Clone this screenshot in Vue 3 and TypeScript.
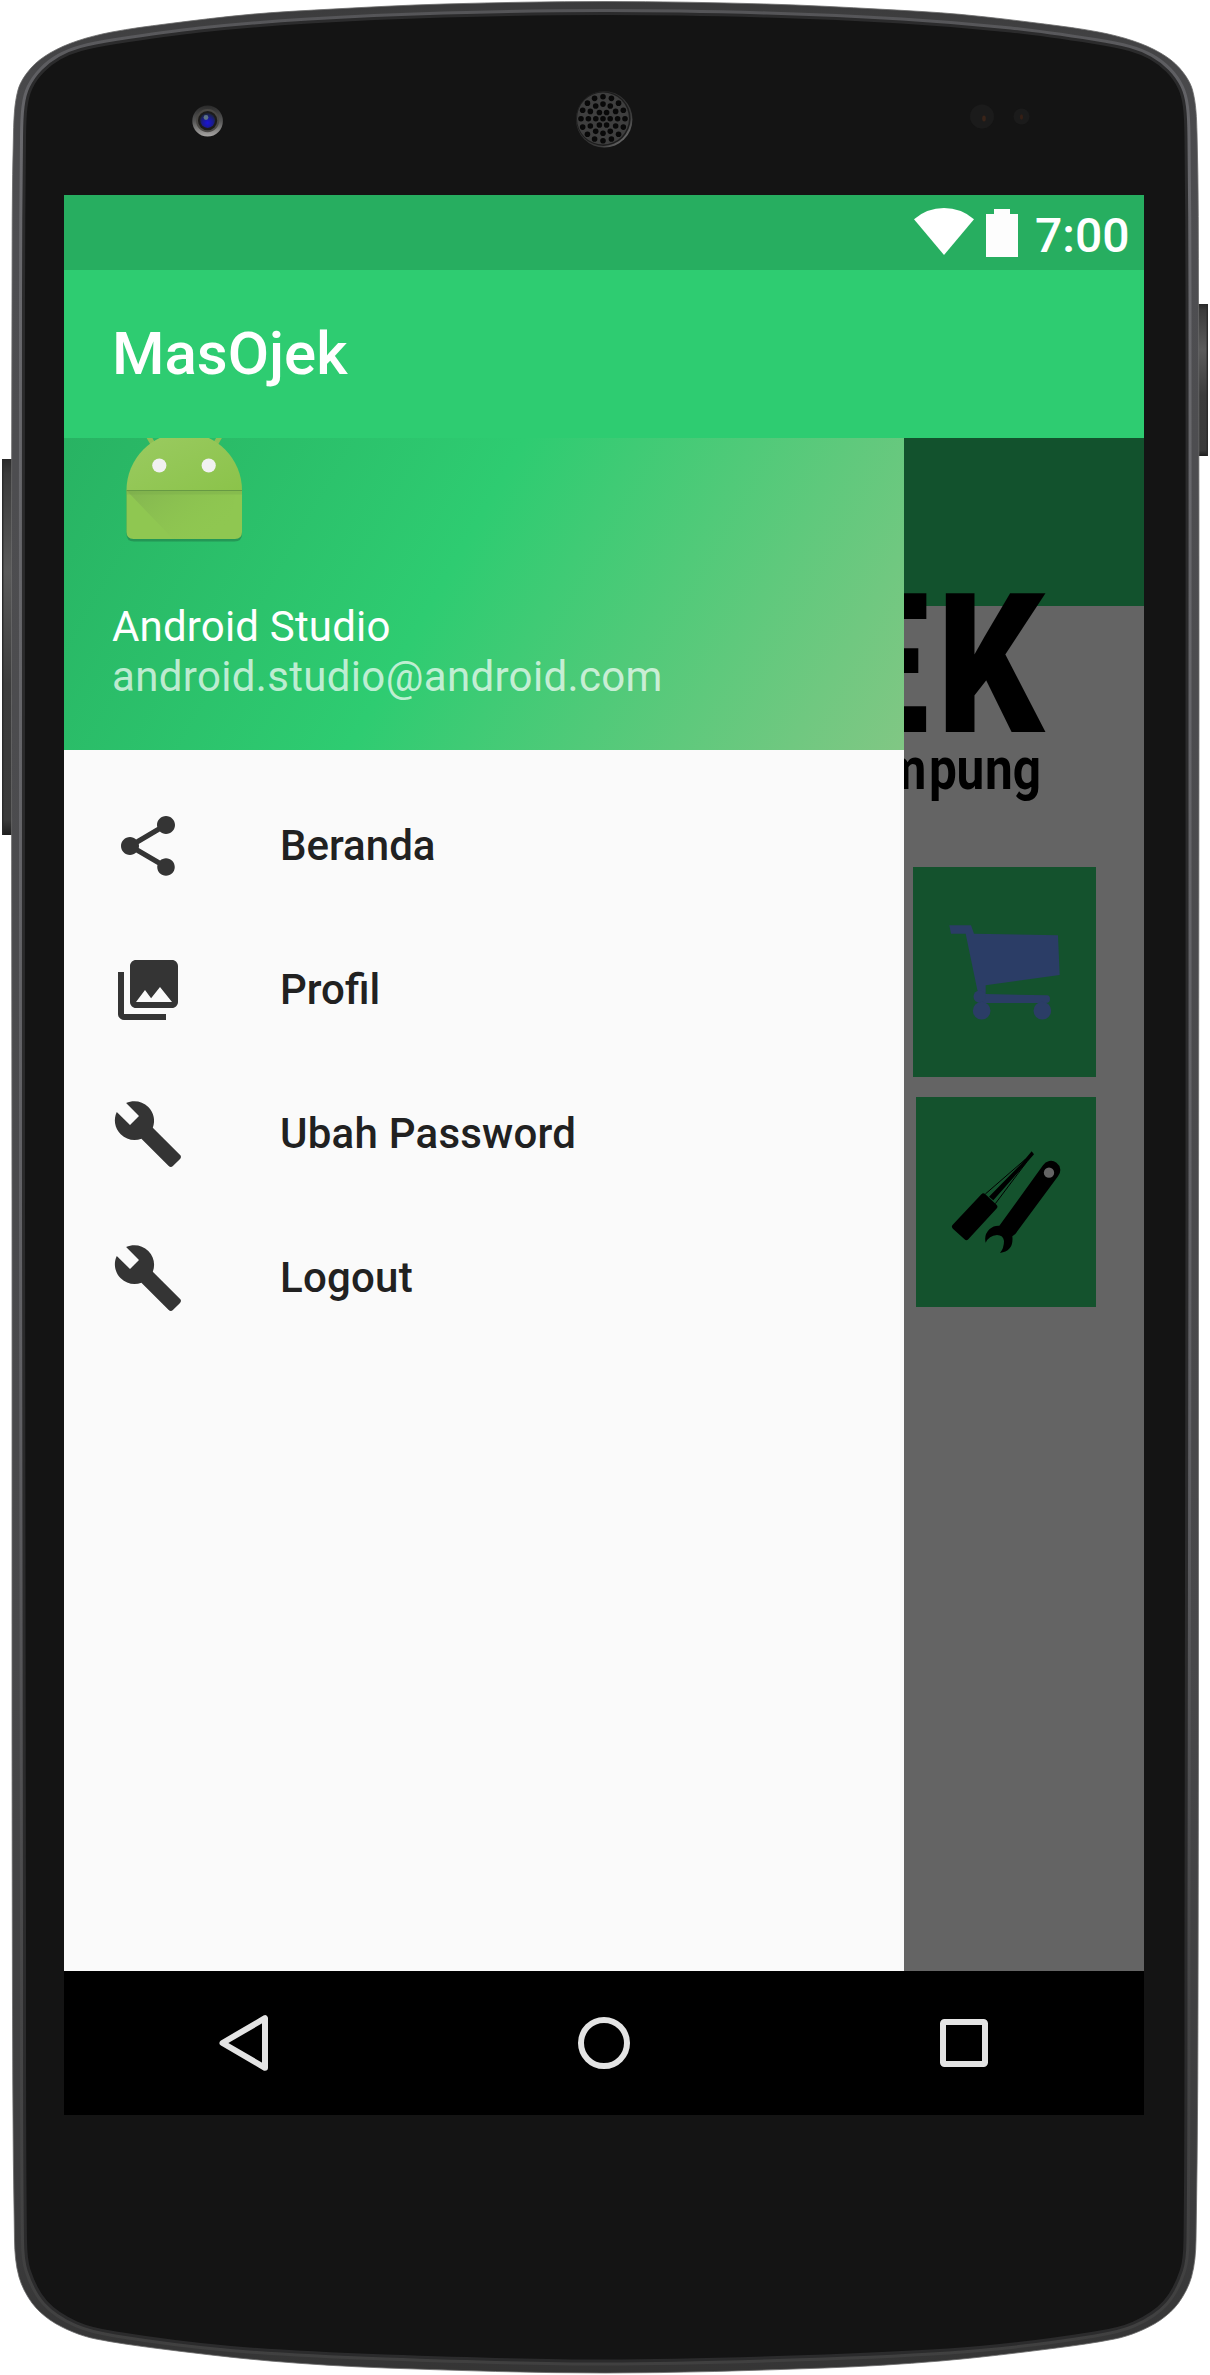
<script setup lang="ts">
type Point = [number, number]

interface MenuItem {
  label: string
  icon: string
}

const share =
  'M18 16.08c-.76 0-1.44.3-1.96.77L8.91 12.7c.05-.23.09-.46.09-.7s-.04-.47-.09-.7l7.05-4.11c.54.5 1.25.81 2.04.81 1.66 0 3-1.34 3-3s-1.34-3-3-3-3 1.34-3 3c0 .24.04.47.09.7L8.04 9.81C7.5 9.31 6.79 9 6 9c-1.66 0-3 1.34-3 3s1.34 3 3 3c.79 0 1.5-.31 2.04-.81l7.12 4.16c-.05.21-.08.43-.08.65 0 1.61 1.31 2.92 2.92 2.92s2.92-1.31 2.92-2.92-1.31-2.92-2.92-2.92z'
const gallery =
  'M22 16V4c0-1.1-.9-2-2-2H8c-1.1 0-2 .9-2 2v12c0 1.1.9 2 2 2h12c1.1 0 2-.9 2-2zm-11-4l2.03 2.71L16 11l4 5H8l3-4zM2 6v14c0 1.1.9 2 2 2h14v-2H4V6H2z'
const wrench =
  'M22.7 19l-9.1-9.1c.9-2.3.4-5-1.5-6.9-2-2-5-2.4-7.4-1.3L9 6 6 9 1.6 4.7C.4 7.1.9 10.1 2.9 12.1c1.9 1.9 4.6 2.4 6.9 1.5l9.1 9.1c.4.4 1 .4 1.4 0l2.3-2.3c.5-.4.5-1.1.1-1.4z'

const menu: MenuItem[] = [
  { label: 'Beranda', icon: share },
  { label: 'Profil', icon: gallery },
  { label: 'Ubah Password', icon: wrench },
  { label: 'Logout', icon: wrench },
]

// Left half of the case outline, top centre to bottom centre.
const outerEdge: Point[] = [
  [605, 1.5], [444, 4], [328, 9.3], [251, 14.3], [166, 24], [112, 32], [77, 41], [50, 53],
  [31, 68], [18, 90], [13.5, 133], [12, 300], [11.5, 700], [12, 1200], [12.3, 1920], [14.5, 2240],
  [19, 2277], [32, 2303], [50, 2320], [73, 2332], [96, 2339], [154, 2348], [270, 2361], [386, 2368], [605, 2373],
]
const innerEdge: Point[] = [
  [605, 13.5], [444, 16], [309, 22], [200, 31], [116, 42.5], [81, 49.5], [60, 58], [43, 71],
  [31, 88], [26, 107], [24.5, 140], [23.5, 300], [23.5, 700], [23.5, 1200], [24.5, 1920], [25.5, 2240],
  [29, 2270], [46, 2302], [77, 2323], [116, 2333], [231, 2347.5], [386, 2356], [605, 2361],
]

// Closed Catmull-Rom curve through the half outline and its mirror image.
function outline(half: Point[]): string {
  const mirrored = half.slice(1, -1).reverse().map(([x, y]): Point => [1210.5 - x, y])
  const pts = [...half, ...mirrored]
  const n = pts.length
  let d = `M${pts[0][0]} ${pts[0][1]}`
  for (let i = 0; i < n; i++) {
    const a = pts[(i - 1 + n) % n]
    const b = pts[i]
    const c = pts[(i + 1) % n]
    const e = pts[(i + 2) % n]
    const ab = Math.hypot(b[0] - a[0], b[1] - a[1])
    const bc = Math.hypot(c[0] - b[0], c[1] - b[1])
    const ce = Math.hypot(e[0] - c[0], e[1] - c[1])
    const t1 = bc / (ab + bc) / 3
    const t2 = bc / (bc + ce) / 3
    const p = [b[0] + (c[0] - a[0]) * t1, b[1] + (c[1] - a[1]) * t1]
    const q = [c[0] - (e[0] - b[0]) * t2, c[1] - (e[1] - b[1]) * t2]
    d += `C${p[0].toFixed(1)} ${p[1].toFixed(1)} ${q[0].toFixed(1)} ${q[1].toFixed(1)} ${c[0]} ${c[1]}`
  }
  return d + 'Z'
}

const outer = outline(outerEdge)
const inner = outline(innerEdge)

// Speaker grille: rings of holes as [radius, count].
const rings: [number, number][] = [[0, 1], [7.2, 6], [14.6, 12], [22, 16]]
const holes: Point[] = rings.flatMap(([r, count]) =>
  Array.from({ length: count }, (_, i): Point => {
    const a = (i / count) * Math.PI * 2
    return [603 + r * Math.cos(a), 118.7 + r * Math.sin(a)]
  }),
)
</script>

<template>
  <div class="phone">
    <svg class="case" viewBox="0 0 1210 2375" width="1210" height="2375">
      <defs>
        <linearGradient id="rim" x1="0" y1="0" x2="0" y2="1">
          <stop offset="0" stop-color="#3a3a3b" />
          <stop offset="0.03" stop-color="#48484a" />
          <stop offset="0.1" stop-color="#4e4e51" />
          <stop offset="0.7" stop-color="#48484a" />
          <stop offset="0.95" stop-color="#3a3a3b" />
          <stop offset="1" stop-color="#353535" />
        </linearGradient>
        <linearGradient id="shine" x1="0" y1="0" x2="0" y2="1">
          <stop offset="0" stop-color="#555558" />
          <stop offset="0.05" stop-color="#69696d" />
          <stop offset="0.6" stop-color="#606064" />
          <stop offset="0.85" stop-color="#464647" />
          <stop offset="1" stop-color="#404040" />
        </linearGradient>
        <linearGradient id="key" x1="0" y1="0" x2="0" y2="1">
          <stop offset="0" stop-color="#2a2a2a" />
          <stop offset="0.04" stop-color="#3a3a3a" />
          <stop offset="0.3" stop-color="#5a5a5a" />
          <stop offset="0.6" stop-color="#3c3c3c" />
          <stop offset="0.96" stop-color="#3a3a3a" />
          <stop offset="1" stop-color="#1e1e1e" />
        </linearGradient>
        <linearGradient id="bezel" x1="0" y1="0" x2="0" y2="1">
          <stop offset="0" stop-color="#2a2a2a" />
          <stop offset="0.5" stop-color="#555555" />
          <stop offset="1" stop-color="#a8a6a4" />
        </linearGradient>
        <linearGradient id="grille" x1="0" y1="0" x2="1" y2="1">
          <stop offset="0" stop-color="#262626" />
          <stop offset="0.7" stop-color="#3a3a3a" />
          <stop offset="1" stop-color="#8a8a8a" />
        </linearGradient>
        <radialGradient id="lens" cx="0.5" cy="0.65" r="0.6">
          <stop offset="0" stop-color="#1a14d8" />
          <stop offset="0.6" stop-color="#1a1b8c" />
          <stop offset="1" stop-color="#1c2440" />
        </radialGradient>
        <clipPath id="body"><path :d="outer" /></clipPath>
      </defs>

      <rect x="2" y="459" width="12" height="376" fill="url(#key)" />
      <path d="M2.7 459V835" stroke="#2b2b2b" stroke-width="1.4" />
      <rect x="1197" y="304" width="11" height="152" fill="url(#key)" />
      <path d="M1207.3 304V456" stroke="#2b2b2b" stroke-width="1.4" />

      <path :d="outer" fill="url(#rim)" stroke="#6a6a6a" stroke-width="0.8" />
      <path :d="inner" fill="none" stroke="url(#shine)" stroke-width="9" clip-path="url(#body)" />
      <path :d="inner" fill="#141414" stroke="#2b2b2c" stroke-width="3" />

      <ellipse cx="207.6" cy="121" rx="15.3" ry="15.6" fill="url(#bezel)" />
      <circle cx="207.6" cy="120.6" r="11.6" fill="#4a4845" />
      <circle cx="207.6" cy="120.6" r="9.6" fill="#1c1b1a" />
      <circle cx="207.6" cy="120.6" r="7.4" fill="url(#lens)" />
      <circle cx="206" cy="117.5" r="2.4" fill="#5e7484" />

      <circle cx="604.2" cy="119.4" r="28.2" fill="url(#grille)" />
      <circle cx="603.4" cy="118.7" r="27.2" fill="#1d1d1d" />
      <circle cx="603" cy="118.5" r="26" fill="#3e3e3e" />
      <circle v-for="(h, i) in holes" :key="i" :cx="h[0]" :cy="h[1]" r="2.8" fill="#080808" />

      <circle cx="982" cy="116.5" r="12" fill="#1b1b1b" />
      <ellipse cx="984" cy="118.5" rx="1.8" ry="3" fill="#3a2419" />
      <circle cx="1021.5" cy="116.5" r="8" fill="#1b1b1b" />
      <ellipse cx="1021.5" cy="117" rx="1.6" ry="2.8" fill="#351f15" />
    </svg>

    <main class="screen">
      <header class="status">
        <svg width="60" height="47" viewBox="0 0 60 47">
          <path d="M0 11.2Q13 0 30 0Q47 0 60 11.2L30 47Z" fill="#fff" />
        </svg>
        <svg class="battery" width="32" height="48" viewBox="0 0 32 48">
          <path d="M0 5H8V0H24V5H32V48H0Z" fill="#fdfdfd" />
        </svg>
        <span class="clock">7:00</span>
      </header>

      <div class="toolbar"><h1>MasOjek</h1></div>

      <div class="content">
        <nav class="drawer">
          <div class="profile">
            <svg class="avatar" width="144" height="144" viewBox="112 418 144 144">
              <defs>
                <linearGradient id="fold" x1="0" y1="0" x2="1" y2="0.6">
                  <stop offset="0" stop-color="#7fae50" />
                  <stop offset="1" stop-color="#8fc750" stop-opacity="0" />
                </linearGradient>
                <linearGradient id="droid" x1="0" y1="0" x2="1" y2="1">
                  <stop offset="0" stop-color="#9bcb62" />
                  <stop offset="1" stop-color="#8bc34a" />
                </linearGradient>
              </defs>
              <path d="M126.5 491H242V534Q242 541.5 234.5 541.5H134Q126.5 541.5 126.5 534Z" fill="#1f7f49" opacity="0.6" />
              <path d="M146 432L153 444M222.5 432L215.5 444" stroke="#8fbf55" stroke-width="5" />
              <path d="M126.5 490.5A57.75 58 0 0 1 242 490.5Z" fill="url(#droid)" />
              <path d="M126.5 490.5H242V532Q242 539 235 539H133.5Q126.5 539 126.5 532Z" fill="#8fc751" />
              <path d="M127 491H236L228 539H173Z" fill="url(#fold)" opacity="0.75" />
              <path d="M126.5 492.5H242" stroke="#78aa4a" stroke-width="4" opacity="0.35" />
              <path d="M126.5 490.5H242" stroke="#679a43" stroke-width="1.2" />
              <circle cx="159.3" cy="465.5" r="7.1" fill="#f1f1f1" />
              <circle cx="208.7" cy="465.5" r="7.1" fill="#f1f1f1" />
            </svg>
            <div class="name">Android Studio</div>
            <div class="mail">android.studio@android.com</div>
          </div>
          <ul class="menu">
            <li v-for="item in menu" :key="item.label">
              <svg width="72" height="72" viewBox="0 0 24 24"><path :d="item.icon" fill="#343434" /></svg>
              <span>{{ item.label }}</span>
            </li>
          </ul>
        </nav>

        <section class="home">
          <div class="home-bar"></div>
          <svg class="brand" width="240" height="261" viewBox="904 606 240 261">
            <g class="logo">
              <text x="-79" y="732.5" transform="translate(904 0) scale(0.82 1)">E</text>
              <text x="38.2" y="732.5" transform="translate(904 0) scale(0.858 1)">K</text>
            </g>
            <text class="tagline" y="789" transform="translate(904 0) scale(0.84 1)" x="-24.5 29.8 62.5 96.5 129.5">mpung</text>
          </svg>
          <div class="tile shop">
            <svg viewBox="159 81 549 630" width="183" height="210">
              <g fill="#2b3d66">
                <path d="M268 256H333L342 281L594 286L599 405L377 436V462L562 466Q570 467 570 478Q570 489 558 489H370L352 450L317 281H273Z" />
                <circle cx="359" cy="470" r="18.5" />
                <circle cx="365" cy="512" r="26.5" />
                <circle cx="547" cy="512" r="26.5" />
              </g>
            </svg>
          </div>
          <div class="tile tools">
            <svg viewBox="168 771 540 630" width="180" height="210">
              <path d="M515 934L522 943L496 973L400 1081L387 1070L483 972Z" />
              <path d="M496 958L376 1062M500 966L406 1091" stroke="#000" stroke-width="3" />
              <path d="M370 1068L404 1100L319 1192L284 1160Z" stroke="#000" stroke-width="16" stroke-linejoin="round" />
              <path
                d="M549 976A28 28 0 1 1 594 1009L466 1182L457 1189Q462 1233 420 1239Q432 1225 432 1203Q430 1185 411 1185Q387 1187 377 1208Q371 1184 389 1167Q401 1156 418 1157Z"
              />
              <circle cx="567" cy="998" r="15.5" fill="#646464" />
            </svg>
          </div>
        </section>
      </div>

      <footer class="keys">
        <svg width="360" height="144" viewBox="0 0 360 144">
          <path d="M158.5 72L201 47.2V96.8Z" stroke-linejoin="round" />
        </svg>
        <svg width="360" height="144" viewBox="0 0 360 144"><circle cx="180" cy="72" r="23" /></svg>
        <svg width="360" height="144" viewBox="0 0 360 144">
          <rect x="159" y="51" width="42" height="42" rx="1.5" />
        </svg>
      </footer>
    </main>
  </div>
</template>

<style>
body {
  background: #fff;
}
</style>

<style scoped>
.phone {
  display: grid;
  width: 1210px;
  height: 2375px;
  overflow: hidden;
  font-family: Roboto, 'Liberation Sans', sans-serif;
}
.case,
.screen {
  grid-area: 1 / 1;
}
.case {
  display: block;
}
.screen {
  z-index: 1;
  display: flex;
  flex-direction: column;
  width: 1080px;
  height: 1920px;
  margin: 195px 0 0 64px;
  overflow: hidden;
}
svg {
  flex: none;
}
.status {
  display: flex;
  flex: none;
  justify-content: flex-end;
  box-sizing: border-box;
  height: 75px;
  padding: 13px 16px 0 0;
  background: #27ae60;
}
.battery {
  margin: 1px 17px 0 12px;
}
.clock {
  width: 93px;
  color: #fff;
  font-size: 48px;
  font-weight: 500;
  line-height: 56px;
  white-space: nowrap;
}
.toolbar {
  display: flex;
  flex: none;
  align-items: center;
  height: 168px;
  padding-left: 48px;
  background: #2ecc71;
}
h1 {
  margin: 0;
  color: #fff;
  font-size: 60px;
  font-weight: 500;
  line-height: 70px;
}
.content {
  display: flex;
  flex: none;
  height: 1533px;
  overflow: hidden;
}
.drawer {
  width: 840px;
  margin-top: -168px;
  background: #fafafa;
}
.profile {
  display: flex;
  flex-direction: column;
  justify-content: flex-end;
  box-sizing: border-box;
  height: 480px;
  padding: 0 48px 48px;
  background: linear-gradient(119.745deg, #27ae60, #2ecc71 50%, #81c784);
  color: #fff;
  font-size: 42px;
}
.avatar {
  display: block;
}
.name {
  margin-top: 40px;
  line-height: 50px;
  letter-spacing: 0.18px;
}
.mail {
  line-height: 50px;
  letter-spacing: 0.34px;
  color: rgba(255, 255, 255, 0.7);
}
.menu {
  margin: 0;
  padding: 24px 0 0;
  list-style: none;
}
.menu li {
  display: flex;
  align-items: center;
  gap: 96px;
  height: 144px;
  padding-left: 48px;
  color: #212121;
  font-size: 42px;
  font-weight: 500;
}
.menu span {
  padding-bottom: 2px;
}
.menu li:nth-child(n + 3) span {
  letter-spacing: 0.24px;
}
.home {
  display: flex;
  flex-direction: column;
  width: 240px;
  overflow: hidden;
  background: #646464;
}
.home-bar {
  flex: none;
  height: 168px;
  background: #12522d;
}
.brand {
  display: block;
  overflow: visible;
}
.logo {
  font-size: 195px;
  font-weight: 900;
}
.tagline {
  font-size: 59px;
  font-weight: 700;
}
.tile {
  flex: none;
  align-self: flex-end;
  height: 210px;
  margin-right: 48px;
  background: #14522d;
}
.tile svg {
  display: block;
}
.shop {
  width: 183px;
}
.tools {
  width: 180px;
  margin-top: 20px;
}
.keys {
  display: flex;
  flex: none;
  height: 144px;
  background: #000;
}
.keys svg {
  fill: none;
  stroke: #e4e4e4;
  stroke-width: 6;
}
</style>
